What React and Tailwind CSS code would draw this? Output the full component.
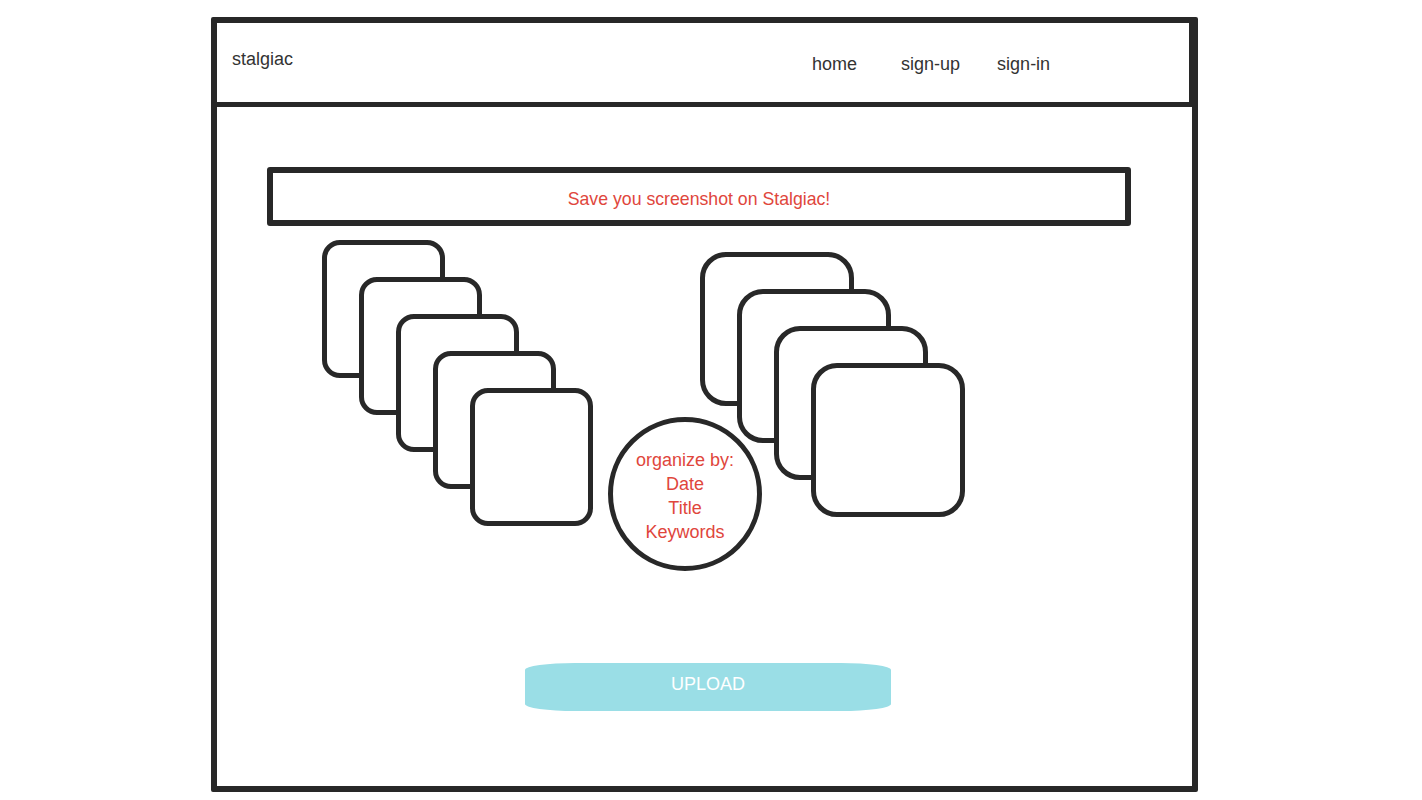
import React from "react";

const leftCards = [0, 1, 2, 3, 4];
const rightCards = [0, 1, 2, 3];

export default function App() {
  return (
    <div className="min-h-[800px] w-full bg-white font-['Liberation_Sans',Arial,sans-serif]">
      <div className="pt-[17px] pl-[211px]">
        <div className="flex h-[775px] w-[987px] flex-col rounded-[2px] border-[6px] border-[#282828]">
          {/* header */}
          <header className="flex h-[84px] shrink-0 border-b-[5px] border-r-[3px] border-[#282828]">
            <div className="pl-[15px] pt-[26px] text-[18px] leading-[20px] text-[#333]">stalgiac</div>
            <nav className="ml-[519px] flex pt-[31px] text-[18px] leading-[20px] text-[#333]">
              <span>home</span>
              <span className="ml-[44px]">sign-up</span>
              <span className="ml-[37px]">sign-in</span>
            </nav>
          </header>

          {/* banner */}
          <div className="ml-[50px] mt-[60px] flex h-[59px] w-[864px] shrink-0 items-center justify-center rounded-[3px] border-[6px] border-[#282828]">
            <span className="pt-[5px] text-[17.7px] text-[#e0463c]">Save you screenshot on Stalgiac!</span>
          </div>

          {/* illustration */}
          <div className="relative h-[350px] w-full shrink-0">
            {leftCards.map((i) => (
              <div
                key={"l" + i}
                className="absolute h-[138px] w-[123px] rounded-[18px] border-[5px] border-[#282828] bg-white"
                style={{ left: 105 + 37 * i, top: 14 + 37 * i }}
              />
            ))}
            {rightCards.map((i) => (
              <div
                key={"r" + i}
                className="absolute h-[154px] w-[154px] rounded-[26px] border-[5px] border-[#282828] bg-white"
                style={{ left: 483 + 37 * i, top: 26 + 37 * i }}
              />
            ))}
            <div className="absolute left-[391px] top-[191px] flex h-[154px] w-[154px] flex-col items-center justify-center rounded-full border-[5px] border-[#282828] bg-white pt-[4px] text-center text-[18px] leading-[24px] text-[#e0463c]">
              <span>organize by:</span>
              <span>Date</span>
              <span>Title</span>
              <span>Keywords</span>
            </div>
          </div>

          {/* upload */}
          <div className="ml-[308px] mt-[87px] flex h-[48px] w-[366px] items-center justify-center rounded-[50px_/_7px] bg-[#9adee6] pb-[5px] text-[18px] text-white">
            UPLOAD
          </div>
        </div>
      </div>
    </div>
  );
}
